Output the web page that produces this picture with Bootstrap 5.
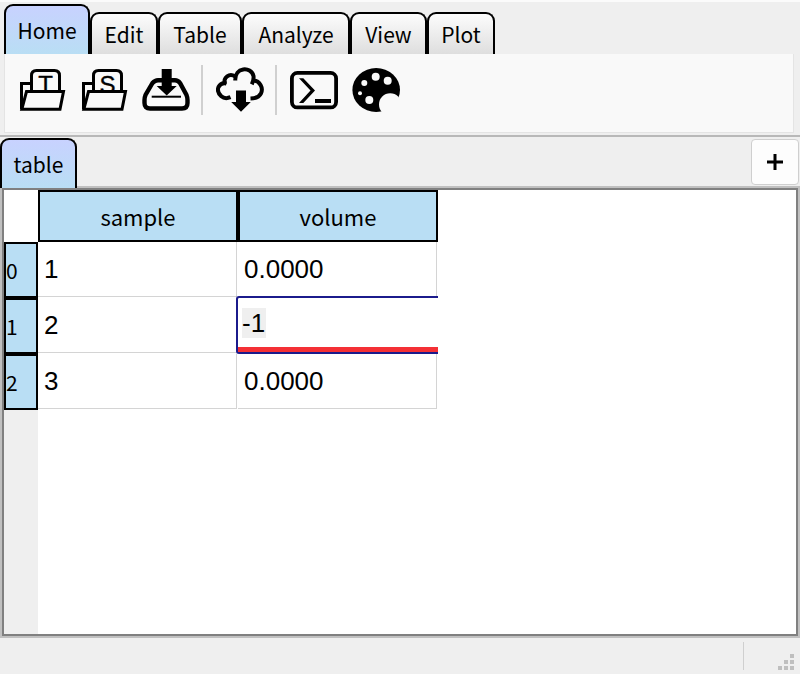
<!DOCTYPE html>
<html lang="en">
<head>
<meta charset="utf-8">
<meta name="viewport" content="width=device-width, initial-scale=1">
<title>Table editor</title>
<link href="https://cdn.jsdelivr.net/npm/bootstrap@5.3.0/dist/css/bootstrap.min.css" rel="stylesheet">
<style>
  body { background: #efefef; color: #000; font-family: "Noto Sans CJK JP", "Noto Sans", sans-serif; font-size: 22px; line-height: 32px; border-top: 2px solid #fbfbfb; }
  .ribbon-tabs { padding: 2px 4px 0; }
  .tab-btn { border: 2px solid #000; border-bottom: 0; border-radius: 9px 9px 0 0; background: linear-gradient(#fcfcfc, #dedede); color: #000; height: 42px; padding: 0; font-size: 21px; line-height: 32px; white-space: nowrap; }
  .tab-btn.active { background: linear-gradient(#c8d2ff, #b9def4); height: 50px; }
  .tab-s { width: 68px; }
  .tab-m { width: 77px; }
  .tab-l { width: 84px; }
  .tab-xl { width: 108px; }
  .tab-btn.active.tab-l { width: 86px; }
  .ribbon-panel { background: #f9f9f9; border: 1px solid #e4e4e4; border-top: 0; margin: 0 6px 0 4px; padding: 11px 6px 17px; }
  .tool-btn { border: 0; background: none; padding: 0 7px; line-height: 1; }
  .tool-btn svg { display: block; width: 48px; height: 48px; }
  .tool-sep { width: 2px; height: 50px; background: #d0d0d0; margin: 0 6px 0 4px; }
  .letter { font: 24px "Liberation Sans", sans-serif; stroke: #000; stroke-width: 0.4px; }
  .sheet-bar { border-top: 2px solid #b8b8b8; margin-top: 2px; padding-top: 1px; }
  .sheet-bar .tab-btn { position: relative; z-index: 1; }
  .add-btn { width: 48px; height: 46px; margin: 1px 1px 0 0; border: 1px solid #cfcfcf; border-radius: 4px; background: #fdfdfd; padding: 0; }
  .sheet { border: 2px solid #808080; box-shadow: 0 0 0 2px #c0c0c0; margin: 0 2px 2px; background: linear-gradient(90deg, #efefef 34px, #fff 34px); }
  .grid-table { table-layout: fixed; border-collapse: separate; border-spacing: 0; width: 434px; }
  .grid-table th, .grid-table td { padding: 0; font-weight: 400; }
  .grid-table thead th, .grid-table thead td { height: 52px; }
  .grid-table thead td { background: #fff; }
  .grid-table th { background: #b9def4; border: 2px solid #000; }
  .grid-table thead th { text-align: center; }
  .index-col { width: 34px; }
  .grid-table tbody th { height: 56px; font-size: 21px; }
  .grid-table tbody td { padding: 0 1px 1px 0; background: #fff; font: 26px/54px "Liberation Sans", Arial, sans-serif; }
  .cell-box { border: solid #d4d4d4; border-width: 0 1px 1px 0; height: 55px; padding-left: 6px; }
  .cell-edit { position: absolute; inset: -2px 0 0 -2px; background: #fff; border: 2px solid #1b1b8c; border-right: 0; border-radius: 3px 0 0 3px; }
  .cell-edit input { display: block; width: 100%; height: 49px; border: 0; outline: 0; padding: 2px 4px 0; line-height: 30px; background: linear-gradient(#efefef, #efefef) 4px 10px / 24px 30px no-repeat; }
  .edit-mark { height: 5px; background: #f43035; }
  .status-bar { height: 36px; padding: 4px 6px 4px; }
  .status-sep { width: 1px; background: #cfcfcf; margin-right: 34px; }
  .grip { width: 16px; height: 16px; }
</style>
<script src="https://cdn.jsdelivr.net/npm/bootstrap@5.3.0/dist/js/bootstrap.bundle.min.js"></script>
</head>
<body class="d-flex flex-column min-vh-100">
<header>
  <nav class="ribbon-tabs d-flex align-items-end" aria-label="Ribbon">
    <button type="button" class="tab-btn tab-l active">Home</button>
    <button type="button" class="tab-btn tab-s">Edit</button>
    <button type="button" class="tab-btn tab-l">Table</button>
    <button type="button" class="tab-btn tab-xl">Analyze</button>
    <button type="button" class="tab-btn tab-m">View</button>
    <button type="button" class="tab-btn tab-s">Plot</button>
  </nav>
  <div class="ribbon-panel d-flex align-items-center" role="toolbar" aria-label="Home tools">
    <button type="button" class="tool-btn" aria-label="Open table">
      <svg viewBox="0 0 48 48" fill="none" stroke="#000" stroke-width="3">
        <path d="M13 17.5H3.5V43"/><path d="M13.5 26V9.500Q13.500 4.500 18.500 4.500H36.500Q41.500 4.500 41.500 9.500V26" fill="#f9f9f9"/>
        <text class="letter" x="27.500" y="27" text-anchor="middle" fill="#000">T</text>
        <path d="M8.500 25.500H45.500L42 43.300H3.800Z" fill="#f9f9f9"/>
      </svg>
    </button>
    <button type="button" class="tool-btn" aria-label="Open session">
      <svg viewBox="0 0 48 48" fill="none" stroke="#000" stroke-width="3">
        <path d="M13 17.5H3.5V43"/><path d="M13.5 26V9.500Q13.500 4.500 18.500 4.500H36.500Q41.500 4.500 41.500 9.500V26" fill="#f9f9f9"/>
        <text class="letter" x="27.500" y="27" text-anchor="middle" fill="#000">S</text>
        <path d="M8.500 25.500H45.500L42 43.300H3.800Z" fill="#f9f9f9"/>
      </svg>
    </button>
    <button type="button" class="tool-btn" aria-label="Save">
      <svg viewBox="0 0 48 48">
        <path d="M16 14.200H33Q36 14.200 38 17L44.500 29Q45.500 31.500 45.500 34V37Q45.500 42.500 40 42.500H8Q2.500 42.500 2.500 37V34Q2.500 31.500 3.500 29L10.500 17Q13 14.200 16 14.200Z" fill="none" stroke="#000" stroke-width="4.400"/>
        <path d="M9.700 30.700H39" stroke="#000" stroke-width="2"/>
        <path d="M19.700 3H29.700V20H34.700L24.700 29.500L14.700 20H19.700Z"/>
      </svg>
    </button>
    <div class="tool-sep"></div>
    <button type="button" class="tool-btn" aria-label="Download from cloud">
      <svg viewBox="0 0 48 48">
        <g fill="none" stroke="#000" stroke-width="4">
          <path d="M14.500 31.200Q9 33.500 5.300 30.300Q.5 26 2.500 21Q5 16 10.500 17.500"/>
          <path d="M8.700 18.500C7 11 13.500 7 19 10.300"/>
          <path d="M19.300 14.500C18.500 1 35 0 37.500 10Q38 14 35.800 18.300"/>
          <path d="M37 14.500C44 14.500 47.500 22 45 27.300C43 31.500 39 32.300 34.500 32.500"/>
        </g>
        <path d="M20 24.500H30V36H34.800L25 45.800L15.200 36H20Z"/>
      </svg>
    </button>
    <div class="tool-sep"></div>
    <button type="button" class="tool-btn" aria-label="Console">
      <svg viewBox="0 0 48 48">
        <rect x="1.900" y="6.900" width="44.200" height="34.500" rx="5.500" fill="none" stroke="#000" stroke-width="3.800"/>
        <path d="M9 12.300H13.300L25 24.500L13.300 37H9L20.500 24.500ZM25 33H41V37H25Z"/>
      </svg>
    </button>
    <button type="button" class="tool-btn" aria-label="Colors">
      <svg viewBox="0 0 48 48">
        <ellipse cx="24.200" cy="24" rx="23.800" ry="22"/>
        <g fill="#f9f9f9"><circle cx="38.200" cy="38.500" r="11.200"/><circle cx="12.300" cy="17" r="3"/><circle cx="23.700" cy="10.700" r="4"/><circle cx="35.700" cy="14.700" r="4"/><circle cx="8" cy="27.300" r="2"/><circle cx="17.300" cy="34" r="4"/></g>
      </svg>
    </button>
  </div>
</header>
<div class="sheet-bar d-flex justify-content-between align-items-start">
  <button type="button" class="tab-btn tab-m active">table</button>
  <button type="button" class="add-btn" aria-label="Add table">
    <svg class="d-block mx-auto" width="16" height="16" viewBox="0 0 16 16"><path d="M8 0V16M0 8H16" stroke="#000" stroke-width="3"/></svg>
  </button>
</div>
<main class="sheet flex-grow-1">
  <table class="grid-table">
    <colgroup><col class="index-col"><col><col></colgroup>
    <thead>
      <tr><td></td><th scope="col">sample</th><th scope="col">volume</th></tr>
    </thead>
    <tbody>
      <tr><th scope="row">0</th><td><div class="cell-box">1</div></td><td><div class="cell-box">0.0000</div></td></tr>
      <tr><th scope="row">1</th><td><div class="cell-box">2</div></td><td class="position-relative"><div class="cell-edit"><input type="text" value="-1" aria-label="volume, row 1"><div class="edit-mark"></div></div></td></tr>
      <tr><th scope="row">2</th><td><div class="cell-box">3</div></td><td><div class="cell-box">0.0000</div></td></tr>
    </tbody>
  </table>
</main>
<footer class="status-bar d-flex justify-content-end align-items-stretch">
  <div class="status-sep"></div>
  <svg class="grip align-self-end" viewBox="0 0 16 16" fill="#bfbfbf" aria-hidden="true"><path d="M12 0h4v4h-4zM6 6h4v4H6zM12 6h4v4h-4zM0 12h4v4H0zM6 12h4v4H6zM12 12h4v4h-4z"/></svg>
</footer>
</body>
</html>
